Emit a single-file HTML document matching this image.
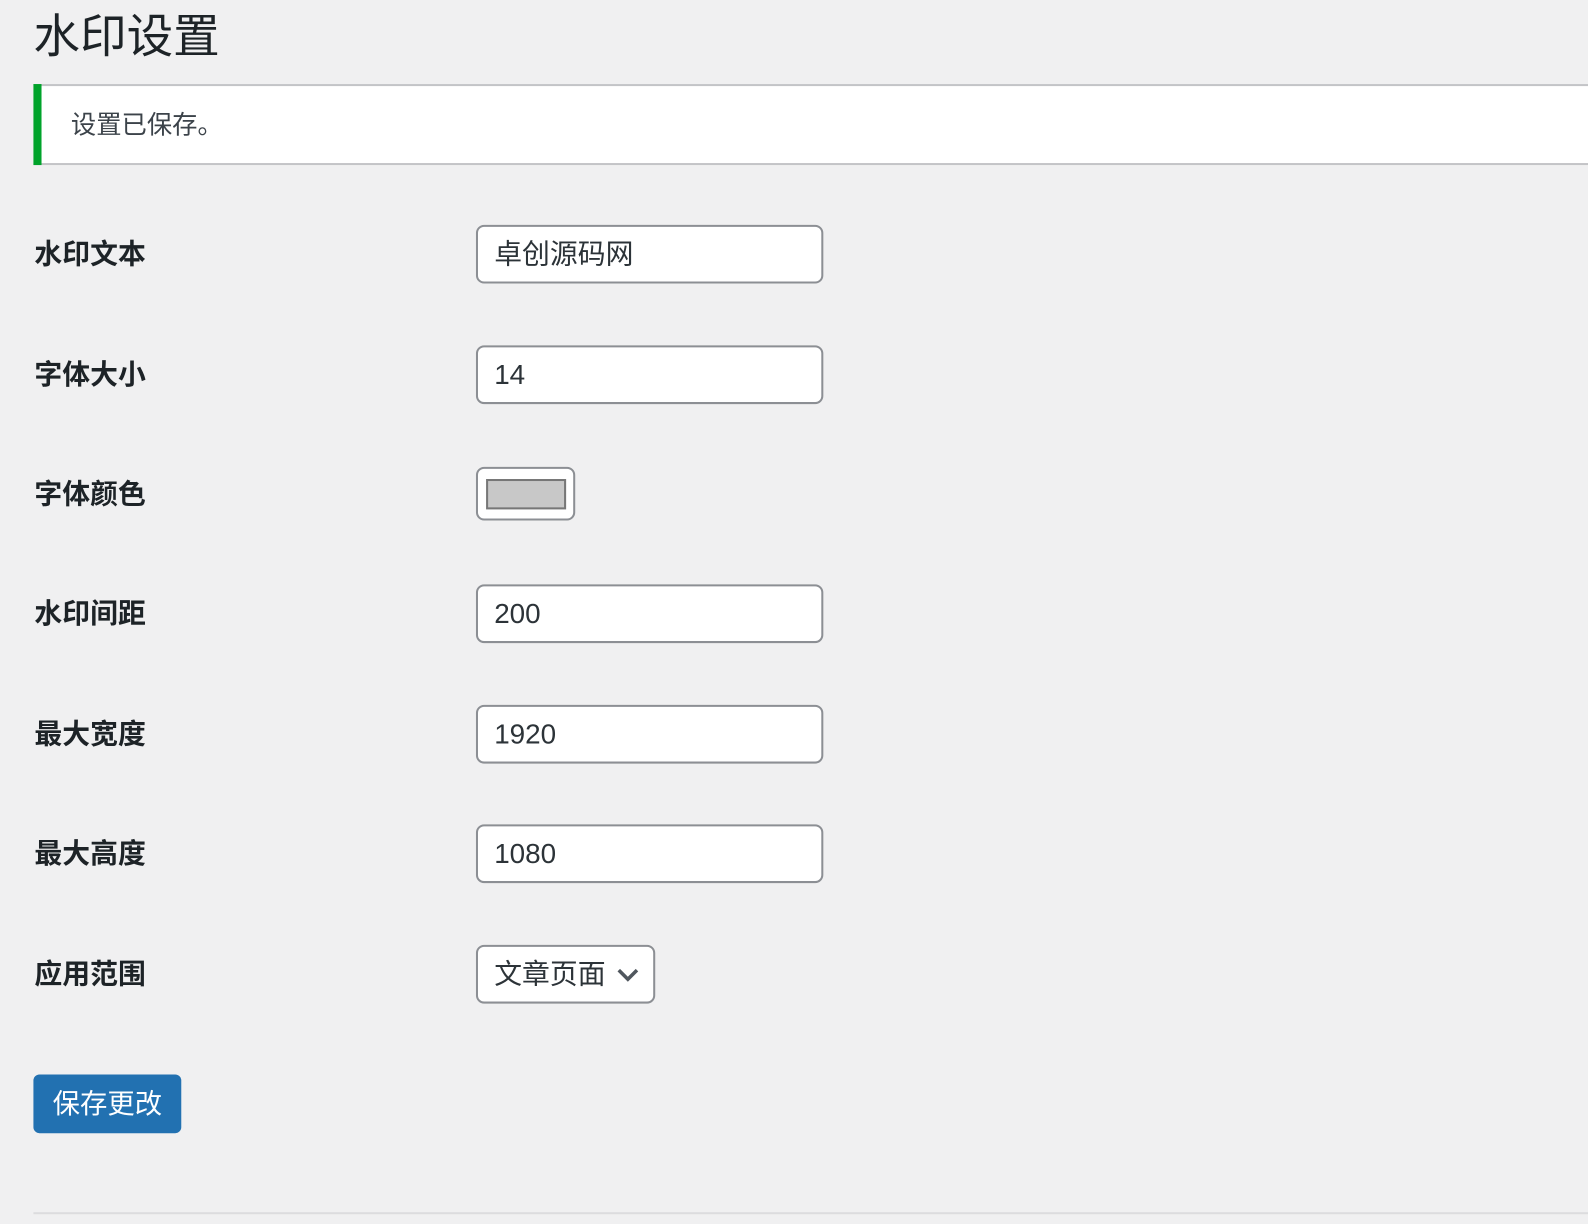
<!DOCTYPE html>
<html><head><meta charset="utf-8"><style>
html,body{margin:0;padding:0;background:#f0f0f1;width:1588px;height:1224px;overflow:hidden;position:relative;font-family:"Liberation Sans","Noto Sans CJK SC",sans-serif;color:#1d2327}
#w{position:absolute;left:0;top:0;width:1588px;height:1224px;transform:scale(1.0127);transform-origin:0 0}
.a{position:absolute}
h1{position:absolute;left:33px;top:6px;margin:0;font-size:46px;font-weight:400;line-height:60px;color:#1d2327}
.notice{left:33px;top:83px;width:1555px;height:76px;background:#fff;border-top:2px solid #c3c4c7;border-bottom:2px solid #c3c4c7}
.notice .bar{position:absolute;left:0;top:-2px;width:8px;height:80px;background:#00a32a}
.notice span{position:absolute;left:37px;top:23px;font-size:25px;line-height:32px;color:#3c434a}
.lab{left:34px;font-size:27.5px;font-weight:bold;line-height:36px;color:#1d2327}
.inp{left:470px;width:339px;height:54px;background:#fff;border:2px solid #8c8f94;border-radius:8px}
.inp span{position:absolute;left:16px;top:9px;font-size:27.5px;line-height:36px;color:#2c3338}
.btn{left:33px;top:1061px;width:146px;height:58px;background:#2271b1;border-radius:6px;color:#fff;font-size:27px;line-height:58px;text-align:center}
.hr{left:33px;top:1197px;width:1555px;height:2px;background:#dcdcde}
</style></head><body><div id="w">
<h1>水印设置</h1>
<div class="a notice"><div class="bar"></div><span>设置已保存。</span></div>

<div class="a lab" style="top:233px">水印文本</div>
<div class="a inp" style="top:222px"><span>卓创源码网</span></div>

<div class="a lab" style="top:352px">字体大小</div>
<div class="a inp" style="top:341px"><span>14</span></div>

<div class="a lab" style="top:470px">字体颜色</div>
<div class="a" style="left:470px;top:461px;width:94px;height:49px;background:#fff;border:2px solid #8c8f94;border-radius:8px"></div>
<div class="a" style="left:480px;top:473px;width:75px;height:26px;background:#c8c8c8;border:2px solid #777"></div>

<div class="a lab" style="top:588px">水印间距</div>
<div class="a inp" style="top:577px"><span>200</span></div>

<div class="a lab" style="top:707px">最大宽度</div>
<div class="a inp" style="top:696px"><span>1920</span></div>

<div class="a lab" style="top:825px">最大高度</div>
<div class="a inp" style="top:814px"><span>1080</span></div>

<div class="a lab" style="top:944px">应用范围</div>
<div class="a inp" style="top:933px;width:173px"><span>文章页面</span>
<svg class="a" style="left:137px;top:20px" width="22" height="16" viewBox="0 0 22 16"><path d="M2 3 L11 12 L20 3" fill="none" stroke="#50575e" stroke-width="3.5"/></svg>
</div>

<div class="a btn">保存更改</div>
<div class="a hr"></div>
</div></body></html>
